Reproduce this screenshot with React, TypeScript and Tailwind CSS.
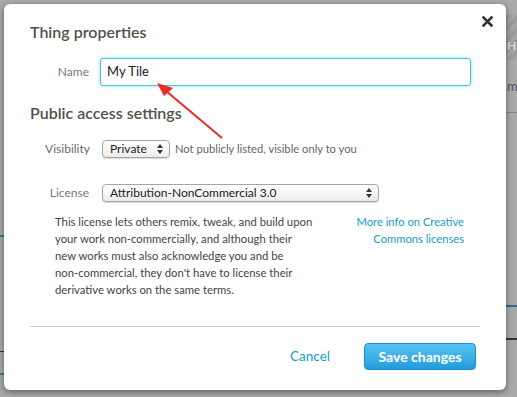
import React from 'react';

const font = { fontFamily: 'Lato, "Open Sans", sans-serif' };

const SelectBox: React.FC<{ label: string; className?: string }> = ({ label, className }) => (
  <div
    className={`flex items-center justify-between h-[18px] rounded-[4px] border border-[#a5a5a5] bg-gradient-to-b from-white to-[#ececec] pl-[7px] pr-[6px] text-[12px] text-[#222] shadow-[0_1px_1px_rgba(0,0,0,0.15)] ${className ?? ''}`}
  >
    <span>{label}</span>
    <svg width="6" height="10" viewBox="0 0 6 10" className="ml-2">
      <path d="M0 4 L3 0 L6 4 Z" fill="#333" />
      <path d="M0 6 L3 10 L6 6 Z" fill="#333" />
    </svg>
  </div>
);

export default function App() {
  return (
    <div className="relative w-[517px] h-[397px] overflow-hidden bg-[#a9a9a9] pt-[4px] pl-[4px]" style={font}>
      {/* page behind the overlay */}
      <div className="absolute right-0 top-[15px] w-[11px] h-[45px] bg-[repeating-linear-gradient(135deg,#9a9a9a_0,#9a9a9a_4px,#a4a4a4_4px,#a4a4a4_8px)]" />
      <div className="absolute left-[507px] top-[37px] text-[12px] font-bold text-[#d8d8d8]">H</div>
      <div className="absolute left-[507px] top-[77px] text-[13px] text-[#555]">m</div>
      <div className="absolute right-0 top-[112px] w-[11px] h-px bg-[#888]" />
      <div className="absolute right-0 top-[305px] w-[11px] h-[2px] bg-[#2b6f8a]" />
      <div className="absolute right-0 top-[338px] w-[11px] h-[2px] bg-[#333]" />
      <div className="absolute left-0 top-[235px] w-[4px] h-[2px] bg-[#2c7ea3]" />
      <div className="absolute left-0 top-[351px] w-[4px] h-px bg-[#333]" />
      <div className="absolute left-0 top-[373px] w-[4px] h-[2px] bg-[#2c7ea3]" />

      <div className="relative w-[502px] h-[386px] rounded-[6px] bg-white shadow-[0_2px_6px_rgba(0,0,0,0.45)]">
        <div className="flex items-start justify-between pl-[26px] pr-[13px] pt-[18px]">
          <h3 className="text-[16px] leading-[20px] font-semibold text-[#555048]">Thing properties</h3>
          <svg width="11" height="11" viewBox="0 0 11 11" className="mt-[-6px]">
            <path d="M1.5 1.5 L9.5 9.5 M9.5 1.5 L1.5 9.5" stroke="#333" strokeWidth="2.6" strokeLinecap="square" />
          </svg>
        </div>

        <div className="flex items-center mt-[16px]">
          <label className="w-[85px] text-right text-[12px] text-[#777]">Name</label>
          <div className="ml-[11px] w-[371px] h-[28px] flex items-center rounded-[3px] border border-[#4dbfdc] shadow-[0_0_4px_rgba(80,200,230,0.6)] px-[6px] text-[13px] text-[#222]">
            My Tile
          </div>
        </div>

        <h3 className="mt-[17px] pl-[26px] text-[16px] leading-[20px] font-semibold text-[#555048]">Public access settings</h3>

        <div className="flex items-center mt-[17px]">
          <label className="w-[86px] text-right text-[12px] text-[#6a6a6a]">Visibility</label>
          <SelectBox label="Private" className="ml-[12px] w-[68px]" />
          <span className="ml-[5px] text-[11.2px] text-[#666]">Not publicly listed, visible only to you</span>
        </div>

        <div className="flex items-center mt-[26px]">
          <label className="w-[85px] text-right text-[12px] text-[#777]">License</label>
          <SelectBox label="Attribution-NonCommercial 3.0" className="ml-[13px] w-[277px]" />
        </div>

        <div className="flex mt-[11px] pl-[51px] pr-[42px]">
          <p className="text-[11.3px] leading-[17px] text-[#444]">
            This license lets others remix, tweak, and build upon
            <br />
            your work non-commercially, and although their
            <br />
            new works must also acknowledge you and be
            <br />
            non-commercial, they don't have to license their
            <br />
            derivative works on the same terms.
          </p>
          <a className="ml-auto text-right text-[11.2px] leading-[17px] text-[#1a9cc4]">
            More info on Creative
            <br />
            Commons licenses
          </a>
        </div>

        <div className="mx-[26px] mt-[28px] h-px bg-[#d0ccc6]" />

        <div className="flex items-center justify-end pr-[30px] mt-[16px]">
          <a className="text-[13.5px] text-[#1a9cc4]">Cancel</a>
          <button className="ml-[34px] w-[112px] h-[27px] rounded-[4px] border border-[#1f92cc] bg-gradient-to-b from-[#59c3f0] to-[#1f9cdb] text-[14px] font-bold text-white">
            Save changes
          </button>
        </div>
      </div>

      {/* red annotation arrow */}
      <svg className="absolute left-0 top-0" width="517" height="397">
        <line x1="222" y1="138" x2="166" y2="91" stroke="#ec2b24" strokeWidth="2" />
        <path d="M157 83 L173 88 L164 96 Z" fill="#ec2b24" />
      </svg>
    </div>
  );
}
